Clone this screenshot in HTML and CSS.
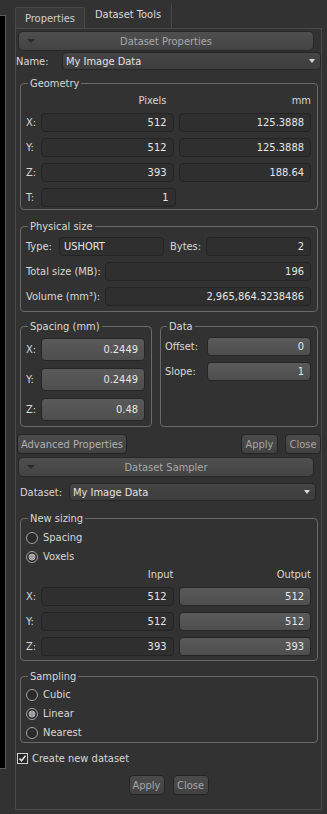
FILE: index.html
```html
<!DOCTYPE html>
<html>
<head>
<meta charset="utf-8">
<link rel="stylesheet" href="styles.css">
</head>
<body>
<div class="app">
  <div class="side"></div>
  <div class="tabwidget">
    <div class="tabbar">
      <div class="tab">Properties</div>
      <div class="tab active">Dataset Tools</div>
    </div>
    <div class="pane">
      <div class="section-header"><span class="caret"></span><span>Dataset Properties</span><span></span></div>
      <div class="name-row">
        <span class="name-lbl">Name:</span>
        <div class="combo"><span>My Image Data</span><span class="arrow"></span></div>
      </div>

      <fieldset class="group geometry">
        <legend>Geometry</legend>
        <div class="grid3 geo-grid">
          <span></span><span class="colhead pix">Pixels</span><span class="colhead mm">mm</span>
          <span class="lbl">X:</span><div class="field">512</div><div class="field">125.3888</div>
          <span class="lbl">Y:</span><div class="field">512</div><div class="field">125.3888</div>
          <span class="lbl">Z:</span><div class="field">393</div><div class="field">188.64</div>
          <span class="lbl">T:</span><div class="field tfield">1</div><span></span>
        </div>
      </fieldset>

      <fieldset class="group physical">
        <legend>Physical size</legend>
        <div class="prow">
          <span class="type-lbl">Type:</span>
          <div class="field left type-field">USHORT</div>
          <span class="bytes-lbl">Bytes:</span>
          <div class="field grow">2</div>
        </div>
        <div class="prow">
          <span class="long-lbl">Total size (MB):</span>
          <div class="field grow">196</div>
        </div>
        <div class="prow">
          <span class="long-lbl">Volume (mm³):</span>
          <div class="field grow">2,965,864.3238486</div>
        </div>
      </fieldset>

      <div class="two">
        <fieldset class="group spacing">
          <legend>Spacing (mm)</legend>
          <div class="sp-grid">
            <span class="lbl">X:</span><div class="field raised tall">0.2449</div>
            <span class="lbl">Y:</span><div class="field raised tall">0.2449</div>
            <span class="lbl">Z:</span><div class="field raised tall">0.48</div>
          </div>
        </fieldset>
        <fieldset class="group data">
          <legend>Data</legend>
          <div class="data-grid">
            <span class="lbl">Offset:</span><div class="field raised">0</div>
            <span class="lbl">Slope:</span><div class="field raised">1</div>
          </div>
        </fieldset>
      </div>

      <div class="btnrow">
        <div class="btn adv">Advanced Properties</div>
        <div class="spacer"></div>
        <div class="btn w37">Apply</div>
        <div class="btn w36">Close</div>
      </div>

      <div class="section-header second"><span class="caret"></span><span>Dataset Sampler</span><span></span></div>
      <div class="dataset-row">
        <span class="dataset-lbl">Dataset:</span>
        <div class="combo"><span>My Image Data</span><span class="arrow"></span></div>
      </div>

      <fieldset class="group sizing">
        <legend>New sizing</legend>
        <div class="radio"><span class="rb"></span><span>Spacing</span></div>
        <div class="radio"><span class="rb on"></span><span>Voxels</span></div>
        <div class="grid3 size-grid">
          <span></span><span class="colhead">Input</span><span class="colhead">Output</span>
          <span class="lbl">X:</span><div class="field">512</div><div class="field raised">512</div>
          <span class="lbl">Y:</span><div class="field">512</div><div class="field raised">512</div>
          <span class="lbl">Z:</span><div class="field">393</div><div class="field raised">393</div>
        </div>
      </fieldset>

      <fieldset class="group sampling">
        <legend>Sampling</legend>
        <div class="radio"><span class="rb"></span><span>Cubic</span></div>
        <div class="radio"><span class="rb on"></span><span>Linear</span></div>
        <div class="radio"><span class="rb"></span><span>Nearest</span></div>
      </fieldset>

      <div class="check-row">
        <svg class="cb" width="11" height="11" viewBox="0 0 11 11"><rect x="0.5" y="0.5" width="10" height="10" fill="#262626" stroke="#cfcfcf"/><polyline points="2.5,5.5 4.5,7.8 8.5,2.8" fill="none" stroke="#e8e8e8" stroke-width="1.5"/></svg>
        <span>Create new dataset</span>
      </div>

      <div class="bottom-btns">
        <div class="btn w36">Apply</div>
        <div class="btn w36">Close</div>
      </div>
    </div>
  </div>
</div>
</body>
</html>
```

FILE: styles.css
```css
* { box-sizing: border-box; }
html, body { margin: 0; padding: 0; }
body {
  background: #323232;
  font-family: "DejaVu Sans Condensed", "DejaVu Sans", sans-serif;
  font-stretch: condensed;
  font-size: 11px;
  line-height: 13px;
  color: #d8d8d8;
  width: 327px;
  height: 814px;
  overflow: hidden;
}
.app { display: flex; align-items: flex-start; }
.side {
  width: 6px;
  height: 754px;
  margin-top: 15px;
  margin-right: 9px;
  background: #000;
  border: 1px solid #5c5c5c;
  border-left: none;
}
.tabwidget { width: 307px; display: flex; flex-direction: column; }
.tabbar { height: 28px; display: flex; align-items: flex-end; }
.tab {
  height: 21px;
  width: 70px;
  display: flex;
  align-items: center;
  justify-content: center;
  background: #393939;
  border: 1px solid #484848;
  border-bottom: none;
  border-radius: 2px 2px 0 0;
  color: #cfcfcf;
}
.tab.active {
  height: 25px;
  width: 87px;
  background: #323232;
  border: none;
  border-right: 1px solid #484848;
  color: #dcdcdc;
  padding-bottom: 3px;
}
.pane {
  height: 782px;
  border: 1px solid #4a4a4a;
  display: flex;
  flex-direction: column;
}
.section-header {
  height: 20px;
  margin: 2px 7px 0 2px;
  border: 1px solid #282828;
  border-radius: 5px;
  background: linear-gradient(#4f4f4f, #434343);
  display: grid;
  grid-template-columns: 1fr auto 1fr;
  align-items: center;
  color: #a9a9a9;
}
.section-header.second { margin-top: 3px; }
.caret {
  justify-self: start;
  margin-left: 8px;
  width: 0;
  height: 0;
  border-left: 4px solid transparent;
  border-right: 4px solid transparent;
  border-top: 4px solid #2a2a2a;
}
.name-row { display: flex; align-items: center; margin-top: 1px; height: 18px; }
.name-lbl { width: 46px; }
.combo {
  flex: 1;
  height: 18px;
  border: 1px solid #262626;
  border-radius: 4px;
  background: linear-gradient(#454545, #3d3d3d);
  display: flex;
  align-items: center;
  justify-content: space-between;
  padding: 0 5px 0 3px;
  color: #e2e2e2;
}
.arrow {
  width: 0;
  height: 0;
  border-left: 3.5px solid transparent;
  border-right: 3.5px solid transparent;
  border-top: 4px solid #d8d8d8;
}
.group {
  margin: 0 3px 0 4px;
  border: 1px solid #6a6a6a;
  border-radius: 4px;
  padding: 0 6px 2px 5px;
  min-width: 0;
}
legend {
  padding: 0 2px;
  margin-left: 2px;
  line-height: 13px;
  color: #d8d8d8;
}
.group.geometry { margin-top: 7px; }
.grid3 {
  display: grid;
  grid-template-columns: 10px 1fr 1fr;
  column-gap: 5px;
  row-gap: 6px;
  align-items: center;
}
.geo-grid { padding-top: 4px; grid-template-rows: 13px repeat(4, 19px); }
.colhead { text-align: right; }
.geo-grid .pix { padding-right: 7px; }
.field {
  height: 19px;
  border: 1px solid #242424;
  border-radius: 4px;
  background: #2f2f2f;
  display: flex;
  align-items: center;
  justify-content: flex-end;
  padding: 0 6px;
  color: #e6e6e6;
  white-space: nowrap;
}
.field.raised {
  background: linear-gradient(#5a5a5a, #4e4e4e);
  border-color: #262626;
}
.field.tall { height: 23px; }
.field.left { justify-content: flex-start; padding-left: 4px; }
.tfield { margin-right: -2px; }
.group.physical { margin-top: 10px; padding-top: 4px; padding-bottom: 5px; }
.prow { display: flex; align-items: center; height: 19px; }
.prow + .prow { margin-top: 6px; }
.type-lbl { width: 33px; }
.type-field { width: 105px; }
.bytes-lbl { width: 36px; margin-left: 6px; }
.long-lbl { width: 79px; }
.field.grow { flex: 1; }
.two { display: flex; gap: 8px; margin: 8px 3px 0 4px; }
.two .group { margin: 0; }
.two .spacing { width: 132px; padding-top: 5px; padding-bottom: 5px; }
.two .data { flex: 1; padding-left: 4px; padding-top: 4px; }
.sp-grid {
  display: grid;
  grid-template-columns: 10px 1fr;
  column-gap: 5px;
  row-gap: 7px;
  align-items: center;
}
.data-grid {
  display: grid;
  grid-template-columns: 42px 1fr;
  row-gap: 6px;
  align-items: center;
}
.btnrow { display: flex; margin: 7px 0 0 1px; height: 20px; gap: 7px; }
.btnrow .spacer { flex: 1; margin-left: -7px; }
.btn {
  height: 20px;
  border: 1px solid #242424;
  border-radius: 4px;
  background: linear-gradient(#4b4b4b, #414141);
  color: #a6a6a6;
  display: flex;
  align-items: center;
  justify-content: center;
  padding: 0 4px;
  white-space: nowrap;
}
.btn.adv { width: 110px; color: #b0b0b0; }
.btn.w37 { width: 37px; }
.btn.w36 { width: 36px; }
.dataset-row { display: flex; align-items: center; height: 18px; margin: 6px 5px 0 4px; }
.dataset-lbl { width: 49px; }
.group.sizing { margin-top: 11px; padding-top: 3px; padding-bottom: 4px; }
.radio { display: flex; align-items: center; height: 19px; gap: 5px; }
.rb {
  width: 12px;
  height: 12px;
  border-radius: 50%;
  border: 1px solid #a2a2a2;
  background: #2a2a2a;
}
.rb.on {
  background: radial-gradient(circle, #9e9e9e 0 2.6px, #c4c4c4 3px, #2a2a2a 3.8px);
}
.size-grid { margin-top: 2px; grid-template-rows: 13px repeat(3, 19px); }
.group.sampling { margin-top: 9px; padding-top: 2px; padding-bottom: 0; }
.check-row { display: flex; align-items: center; height: 16px; margin: 7px 0 0 1px; gap: 4px; }
.cb { display: block; }
.bottom-btns { display: flex; justify-content: center; gap: 8px; margin-top: 9px; }
```
